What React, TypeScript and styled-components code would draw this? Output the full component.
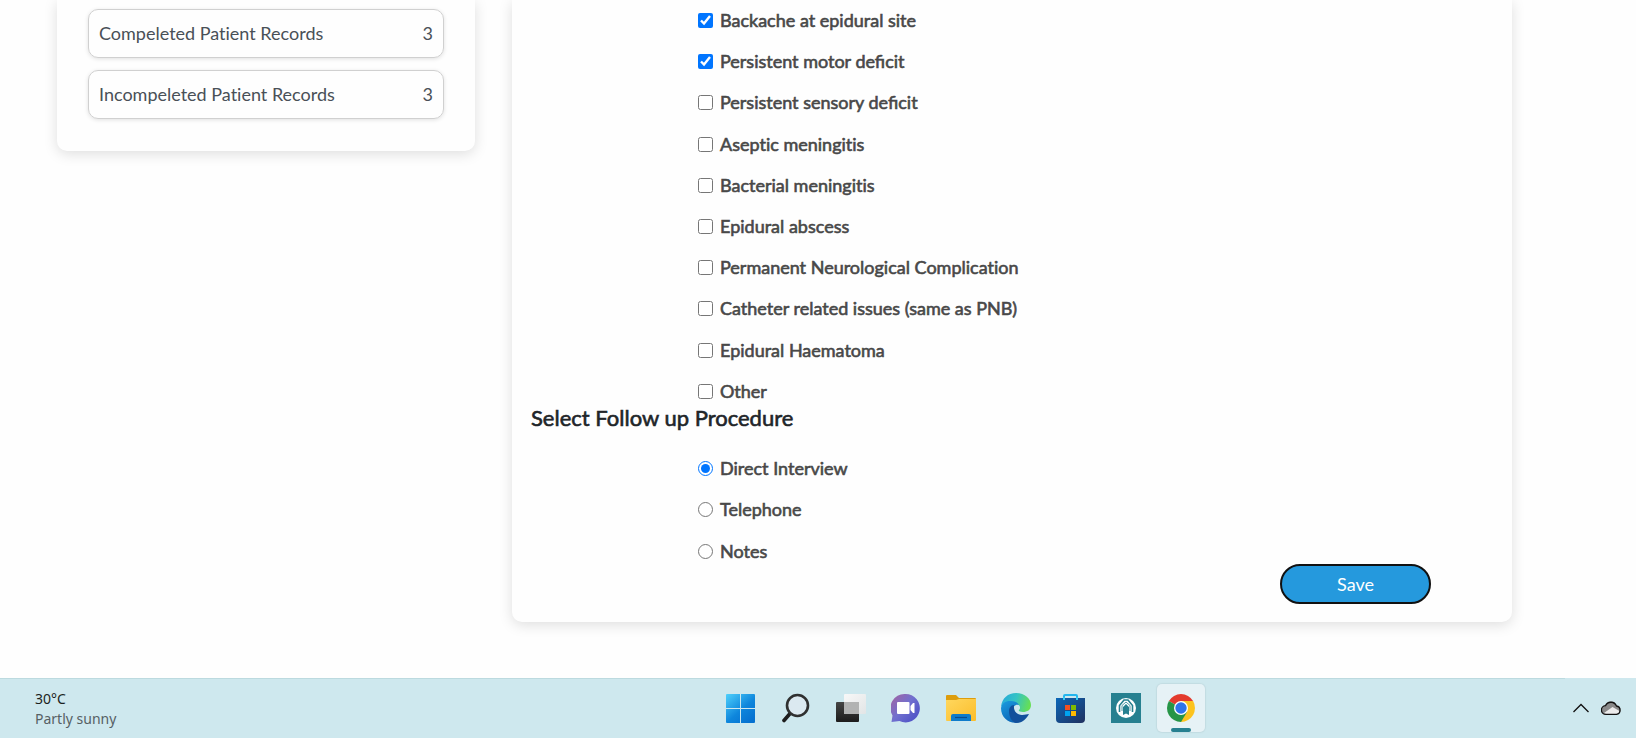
import React from "react";
import styled, { createGlobalStyle, css } from "styled-components";

const GlobalStyle = createGlobalStyle`
  *, *::before, *::after { box-sizing: border-box; }
  body {
    margin: 0;
    background: #fefefe;
    color: #212529;
    font-family: Lato, "Liberation Sans", sans-serif;
    font-size: 18px;
    line-height: 27px;
    font-variant-ligatures: none;
  }
`;

const Screen = styled.div`
  min-height: 100vh;
  display: flex;
  flex-direction: column;
`;

const Content = styled.main`
  flex: 1;
  display: grid;
  grid-template-columns: 418fr 1000fr;
  align-items: start;
  column-gap: 37px;
  padding: 0 124px 48px 57px;
`;

const Card = styled.section`
  background: #fefefe;
  border-radius: 0 0 10px 10px;
  box-shadow: 0 3px 14px rgba(0, 0, 0, 0.13);
`;

const SummaryCard = styled(Card)`
  display: flex;
  flex-direction: column;
  gap: 12px;
  padding: 9px 31px 32px;
`;

const SummaryRow = styled.div`
  display: flex;
  justify-content: space-between;
  align-items: center;
  height: 49px;
  padding: 0 10px;
  color: #495057;
  border: 1px solid #d0d0d0;
  border-radius: 10px;
  box-shadow: 0 1px 4px rgba(0, 0, 0, 0.12);
`;

const FormCard = styled(Card).attrs({ as: "form" })`
  display: flex;
  flex-direction: column;
  padding: 0 81px 18px 19px;
`;

const Options = styled.div<{ $height: number }>`
  display: grid;
  grid-auto-rows: 1fr;
  min-height: ${(p) => p.$height}px;
  margin-left: 167px;
  justify-items: start;
`;

const fauxBold = css`
  -webkit-text-stroke: 0.6px currentColor;
`;

const Option = styled.label<{ $ligatures: boolean }>`
  display: flex;
  align-items: center;
  gap: 7px;
  color: #484848;
  font-variant-ligatures: ${(p) => (p.$ligatures ? "normal" : "none")};
  ${fauxBold}
`;

const Tick = styled.input`
  width: 15px;
  height: 15px;
  margin: 0;
  accent-color: #0075ff;
`;

const Heading = styled.h2`
  margin: -8px 0 16px;
  font-size: 22px;
  line-height: 28px;
  font-weight: 400;
  ${fauxBold}
`;

const SaveButton = styled.button`
  align-self: flex-end;
  width: 151px;
  height: 40px;
  margin-top: -8px;
  border: 2px solid #111;
  border-radius: 20px;
  background: #2599dd;
  color: #fff;
  font: inherit;
`;

const Taskbar = styled.footer`
  display: grid;
  grid-template-columns: 717fr auto 431fr;
  align-items: center;
  height: 60px;
  background: linear-gradient(90deg, #bcdadf 1565px, #cee8ee 0) top / 100% 1px no-repeat #cee8ee;
`;

const Weather = styled.div`
  padding: 2px 0 0 35px;
  font-family: "Noto Sans", sans-serif;
  font-size: 14px;
  line-height: 20px;
  color: #1b1f21;
`;

const Muted = styled.div`
  color: #566064;
`;

const Apps = styled.nav`
  display: flex;
  gap: 7px;
`;

const AppButton = styled.button<{ $active?: boolean }>`
  position: relative;
  display: grid;
  place-items: center;
  width: 48px;
  height: 48px;
  padding: 0;
  border: 0;
  border-radius: 5px;
  background: ${(p) => (p.$active ? "#e6f2f6" : "transparent")};
  box-shadow: ${(p) => (p.$active ? "0 0 1px 1px #c3dce2" : "none")};

  &::after {
    content: "";
    display: ${(p) => (p.$active ? "block" : "none")};
    position: absolute;
    bottom: 0;
    left: 14px;
    width: 20px;
    height: 4px;
    border-radius: 2px;
    background: #268090;
  }
`;

const Tray = styled.div`
  display: flex;
  justify-content: flex-end;
  align-items: center;
  gap: 12px;
  padding-right: 15px;
`;

const TrayButton = styled.button`
  display: flex;
  padding: 0;
  border: 0;
  background: none;
`;

const complications: [string, boolean][] = [
  ["Backache at epidural site", true],
  ["Persistent motor deficit", true],
  ["Persistent sensory deficit", false],
  ["Aseptic meningitis", false],
  ["Bacterial meningitis", false],
  ["Epidural abscess", false],
  ["Permanent Neurological Complication", false],
  ["Catheter related issues (same as PNB)", false],
  ["Epidural Haematoma", false],
  ["Other", false],
];

const procedures = ["Direct Interview", "Telephone", "Notes"];

const Icon = ({ children }: { children: React.ReactNode }) => (
  <svg width="30" height="30" viewBox="0 0 30 30" aria-hidden="true">
    {children}
  </svg>
);

const apps: { name: string; active?: boolean; icon: React.ReactNode }[] = [
  {
    name: "Start",
    icon: (
      <Icon>
        <defs>
          <linearGradient id="win" gradientUnits="userSpaceOnUse" x1="0" y1="1" x2="24" y2="29">
            <stop offset="0" stopColor="#4fd0fb" />
            <stop offset="0.6" stopColor="#0e86dc" />
            <stop offset="1" stopColor="#0671d0" />
          </linearGradient>
        </defs>
        <path fill="url(#win)" d="M1 1h13v14H0V2q0-1 1-1zM15 1h13q1 0 1 1v13H15zM0 16h14v14H1q-1 0-1-1zM15 16h14v13q0 1-1 1H15z" />
      </Icon>
    ),
  },
  {
    name: "Search",
    icon: (
      <Icon>
        <path d="M9.500 20L3 27.500" stroke="#1d1d1d" strokeWidth="3.600" strokeLinecap="round" />
        <circle cx="16.500" cy="12.500" r="10.500" fill="#dbe9f0" stroke="#2f3030" strokeWidth="2.600" />
      </Icon>
    ),
  },
  {
    name: "Task view",
    icon: (
      <Icon>
        <defs>
          <linearGradient id="tvd" x1="0" y1="0" x2="0" y2="1">
            <stop offset="0" stopColor="#454545" />
            <stop offset="1" stopColor="#1c1c1c" />
          </linearGradient>
          <linearGradient id="tvl" x1="0" y1="0" x2="1" y2="1">
            <stop offset="0" stopColor="#f8f8f8" />
            <stop offset="1" stopColor="#e2e5e6" />
          </linearGradient>
        </defs>
        <rect x="0" y="9" width="23" height="20" rx="1" fill="url(#tvd)" />
        <rect x="8" y="1" width="22" height="20" rx="1" fill="url(#tvl)" />
        <rect x="8" y="9" width="15" height="12" fill="#b2b3b3" />
      </Icon>
    ),
  },
  {
    name: "Chat",
    icon: (
      <Icon>
        <defs>
          <linearGradient id="chat" x1="0.100" y1="0.200" x2="0.800" y2="0.800">
            <stop offset="0" stopColor="#9667ae" />
            <stop offset="0.500" stopColor="#7170cf" />
            <stop offset="1" stopColor="#5558c8" />
          </linearGradient>
        </defs>
        <path fill="url(#chat)" d="M14.500 1a14.200 14.200 0 1 1-6 27L0.500 29l1-6.500A14.200 14.200 0 0 1 14.500 1z" />
        <rect x="6" y="9" width="12.500" height="12" rx="1" fill="#fff" />
        <path d="M19.500 13l2.500-3h1.500v10H22l-2.500-3z" fill="#fff" />
      </Icon>
    ),
  },
  {
    name: "File Explorer",
    icon: (
      <Icon>
        <defs>
          <linearGradient id="fold" x1="0" y1="0" x2="1" y2="1">
            <stop offset="0" stopColor="#ffd75e" />
            <stop offset="1" stopColor="#fbbd2b" />
          </linearGradient>
        </defs>
        <path d="M0 3q0-1 1-1h9l3 3h16q1 0 1 1v8H0z" fill="#dd9d0c" />
        <path d="M0 7h10l3-1h17v21q0 1-1 1H1q-1 0-1-1z" fill="url(#fold)" />
        <path d="M5 28v-5q0-2 2-2h16q2 0 2 2v5z" fill="#0f7ccb" />
        <path d="M9 24.500h12" stroke="#0a4c8c" strokeWidth="1.200" />
      </Icon>
    ),
  },
  {
    name: "Edge",
    icon: (
      <Icon>
        <defs>
          <linearGradient id="e1" x1="0" y1="0.200" x2="1" y2="0.400">
            <stop offset="0" stopColor="#26a9dc" />
            <stop offset="0.500" stopColor="#35c3c4" />
            <stop offset="1" stopColor="#66df55" />
          </linearGradient>
          <linearGradient id="e2" x1="0" y1="0" x2="0.600" y2="1">
            <stop offset="0" stopColor="#1b9de0" />
            <stop offset="1" stopColor="#0b62b4" />
          </linearGradient>
        </defs>
        <path fill="url(#e1)" d="M0 14C1 5 7 0 15 0c9 0 15 6 15 12 0 5-4 7-8 7-3 0-5-1-4-2 2-2 1-5-2-6C9 8 3 9 0 14z" />
        <path fill="url(#e2)" d="M0 15C1 10 5 7.500 10 8c4 0 7 2 8 4-4-1-6 2-6 5 0 7 5 10 9 11-9 5-21-1-21-13z" />
        <path fill="#12509b" d="M8 18c0-3 2-6 5-6-1 6 3 10 8 10 3 0 5-1 7-1-2 4-6 9-13 9-4-1-7-6-7-12z" />
      </Icon>
    ),
  },
  {
    name: "Microsoft Store",
    icon: (
      <Icon>
        <defs>
          <linearGradient id="store" x1="0" y1="0" x2="1" y2="1">
            <stop offset="0" stopColor="#0b67b8" />
            <stop offset="1" stopColor="#20305e" />
          </linearGradient>
        </defs>
        <path d="M8 7V3q0-1 1-1h11q1 0 1 1v4" fill="none" stroke="#24b6ee" strokeWidth="2" />
        <path d="M0 5h29v21q0 4-4 4H4q-4 0-4-4z" fill="url(#store)" />
        <path d="M8 7V4M21 7V4" stroke="#35cbf5" strokeWidth="2" />
        <path fill="#f25022" d="M9 12h5v5H9z" />
        <path fill="#7fba00" d="M15 12h5v5h-5z" />
        <path fill="#00a4ef" d="M9 18h5v5H9z" />
        <path fill="#ffb900" d="M15 18h5v5h-5z" />
      </Icon>
    ),
  },
  {
    name: "Assistant",
    icon: (
      <Icon>
        <rect width="30" height="30" fill="#268090" />
        <circle cx="15" cy="15" r="10" fill="#fff" />
        <path d="M8.500 19v-6.500L13 7h4l4.500 5.500V19" fill="none" stroke="#268090" strokeWidth="1.600" />
        <path d="M12 22v-8l3-3 3 3v8l-3-1.500z" fill="#268090" />
        <path d="M11 18v-5.500L15 9l4 3.500V18" fill="none" stroke="#268090" strokeWidth="0.800" />
      </Icon>
    ),
  },
  {
    name: "Chrome",
    active: true,
    icon: (
      <Icon>
        <path d="M15 15L2.900 8A14 14 0 0 1 27.100 8z" fill="#e33b2e" />
        <path d="M15 15V8h12.100A14 14 0 0 1 15 29z" fill="#fcc31e" />
        <path d="M15 15l6 4-6 10A14 14 0 0 1 2.900 8z" fill="#269547" />
        <circle cx="15" cy="15" r="7" fill="#fff" />
        <circle cx="15" cy="15" r="5.700" fill="#2f74ea" />
      </Icon>
    ),
  },
];

export default function App() {
  return (
    <Screen>
      <GlobalStyle />
      <Content>
        <SummaryCard>
          <SummaryRow>
            <span>Compeleted Patient Records</span>
            <span>3</span>
          </SummaryRow>
          <SummaryRow>
            <span>Incompeleted Patient Records</span>
            <span>3</span>
          </SummaryRow>
        </SummaryCard>
        <FormCard>
          <Options $height={412}>
            {complications.map(([name, checked]) => (
              <Option key={name} $ligatures={name.includes("fi")}>
                <Tick type="checkbox" defaultChecked={checked} />
                {name}
              </Option>
            ))}
          </Options>
          <Heading>Select Follow up Procedure</Heading>
          <Options $height={124}>
            {procedures.map((name, i) => (
              <Option key={name} $ligatures={false}>
                <Tick type="radio" name="procedure" defaultChecked={i === 0} />
                {name}
              </Option>
            ))}
          </Options>
          <SaveButton type="button">Save</SaveButton>
        </FormCard>
      </Content>
      <Taskbar>
        <Weather>
          <div>30°C</div>
          <Muted>Partly sunny</Muted>
        </Weather>
        <Apps>
          {apps.map((app) => (
            <AppButton key={app.name} $active={app.active} aria-label={app.name}>
              {app.icon}
            </AppButton>
          ))}
        </Apps>
        <Tray>
          <TrayButton aria-label="Show hidden icons">
            <svg width="16" height="10" viewBox="0 0 16 10">
              <path d="M0.500 9L8 1.500 15.500 9" fill="none" stroke="#111" strokeWidth="1.300" />
            </svg>
          </TrayButton>
          <TrayButton aria-label="Cloud storage">
            <svg width="20" height="14" viewBox="0 0 20 14">
              <path d="M5 13a4 4 0 0 1-1-8.500 6 6 0 0 1 11.500 0.500A4 4 0 0 1 15.500 13z" fill="#8a8a8a" />
              <path d="M3 12l8.500-6 7 4q0 3-3 3H5z" fill="#ececec" />
              <path d="M5 13.300a4.200 4.200 0 0 1-0.500-8.600 6 6 0 0 1 11 0.300 4.200 4.200 0 0 1 0 8.300z" fill="none" stroke="#111" strokeWidth="1.300" />
            </svg>
          </TrayButton>
        </Tray>
      </Taskbar>
    </Screen>
  );
}
